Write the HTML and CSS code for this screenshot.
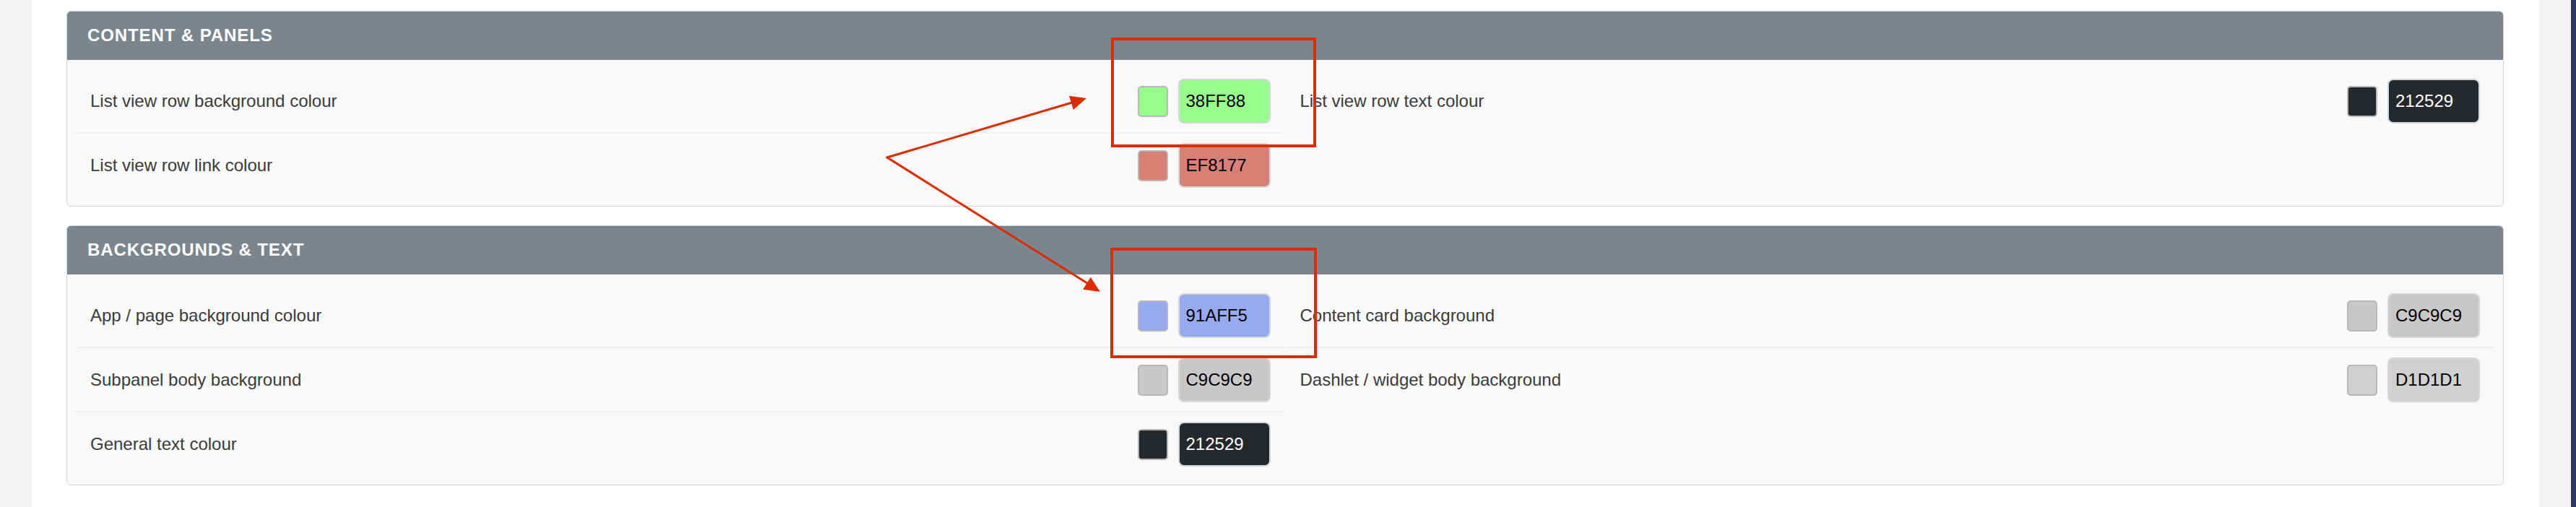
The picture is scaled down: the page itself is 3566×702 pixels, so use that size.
FILE: index.html
```html
<!DOCTYPE html>
<html lang="en">
<head>
    <meta charset="UTF-8">
    <title>Theme colours</title>
    <link rel="stylesheet" href="styles.css">
</head>
<body>
    <div class="gutter"></div>
    <div id="main">
        <div class="panel">
            <div class="panel-head">Content &amp; Panels</div>
            <div class="panel-body">
                <div class="col">
                    <div class="row">
                        <span class="label">List view row background colour</span>
                        <span class="swatch" style="background:#98fd8b"></span>
                        <input class="hex" type="text" value="38FF88" style="background:#98fd8b">
                    </div>
                    <div class="row">
                        <span class="label">List view row link colour</span>
                        <span class="swatch" style="background:#d87f76"></span>
                        <input class="hex" type="text" value="EF8177" style="background:#d87f76">
                    </div>
                </div>
                <div class="col">
                    <div class="row">
                        <span class="label">List view row text colour</span>
                        <span class="swatch" style="background:#26292c"></span>
                        <input class="hex dark" type="text" value="212529" style="background:#26292c">
                    </div>
                </div>
            </div>
        </div>

        <div class="panel">
            <div class="panel-head">Backgrounds &amp; Text</div>
            <div class="panel-body">
                <div class="col">
                    <div class="row">
                        <span class="label">App / page background colour</span>
                        <span class="swatch" style="background:#97aaf0"></span>
                        <input class="hex" type="text" value="91AFF5" style="background:#97aaf0">
                    </div>
                    <div class="row">
                        <span class="label">Subpanel body background</span>
                        <span class="swatch" style="background:#c8c8c8"></span>
                        <input class="hex" type="text" value="C9C9C9" style="background:#c8c8c8">
                    </div>
                    <div class="row">
                        <span class="label">General text colour</span>
                        <span class="swatch" style="background:#26292c"></span>
                        <input class="hex dark" type="text" value="212529" style="background:#26292c">
                    </div>
                </div>
                <div class="col">
                    <div class="row">
                        <span class="label">Content card background</span>
                        <span class="swatch" style="background:#c8c8c8"></span>
                        <input class="hex" type="text" value="C9C9C9" style="background:#c8c8c8">
                    </div>
                    <div class="row">
                        <span class="label">Dashlet / widget body background</span>
                        <span class="swatch" style="background:#d0d0d0"></span>
                        <input class="hex" type="text" value="D1D1D1" style="background:#d0d0d0">
                    </div>
                </div>
            </div>
        </div>
    </div>
    <div class="gutter"></div>
    <div class="edge"></div>

    <!-- annotation drawn over the screenshot -->
    <svg class="marks" width="3566" height="702" viewBox="0 0 3566 702">
        <g fill="none" stroke="#dc2c02" stroke-width="4">
            <rect x="1540" y="54" width="280" height="148"/>
            <rect x="1539" y="345" width="282" height="149"/>
        </g>
        <g stroke="#dc2c02" stroke-width="3" stroke-linecap="round">
            <line x1="1228" y1="218" x2="1484" y2="142"/>
            <line x1="1228" y1="218" x2="1505" y2="392"/>
        </g>
        <g fill="#dc2c02">
            <polygon points="1504,136 1485.8,151.9 1480,132.7"/>
            <polygon points="1523,404 1499.1,400.8 1509.7,383.8"/>
        </g>
    </svg>
</body>
</html>
```

FILE: styles.css
```css
:root{
    --head: #7b858e;
    --line: #d0d4d9;
    --soft: #f3f3f3;
    --body: #f9f9f9;
}
*{
    margin: 0;
    padding: 0;
    box-sizing: border-box;
}
body{
    display: flex;
    height: 702px;
    overflow: hidden;
    font-family: "Liberation Sans", Arial, sans-serif;
    background: #fff;
}
.gutter{
    width: 44px;
    flex: none;
    background: var(--soft);
}
.edge{
    width: 7px;
    flex: none;
    background: #2c3a60;
}
#main{
    flex: 1;
    padding: 15px 49px 0 48px;
    background: #fff;
}
.panel{
    border: 1px solid var(--line);
    border-radius: 6px;
    overflow: hidden;
    margin-bottom: 26px;
    background: var(--body);
}
.panel-head{
    height: 67px;
    display: flex;
    align-items: center;
    padding-left: 28px;
    padding-bottom: 2px;
    background: var(--head);
    color: #fff;
    font-size: 24px;
    font-weight: bold;
    letter-spacing: 0.9px;
    text-transform: uppercase;
}
.panel-body{
    display: grid;
    grid-template-columns: 1fr 1fr;
    column-gap: 2px;
    align-items: start;
    padding: 13px 12px 13px 13px;
}
.row{
    display: flex;
    align-items: center;
    padding: 13px 20px 12px 19px;
    border-bottom: 2px solid #efefef;
}
.row:last-child{
    border-bottom: none;
}
.label{
    flex: 1;
    font-size: 24px;
    color: #3b3b3b;
}
.swatch{
    width: 42px;
    height: 43px;
    border: 2px solid #b8b8b8;
    border-radius: 5px;
    margin-right: 14px;
}
.hex{
    width: 128px;
    height: 62px;
    border: 2px solid #d4d8dd;
    border-radius: 8px;
    padding: 0 9px;
    font-family: "Liberation Sans", Arial, sans-serif;
    font-size: 24px;
    color: #000;
    outline: none;
}
.hex.dark{
    color: #fff;
}
.marks{
    position: absolute;
    top: 0;
    left: 0;
    pointer-events: none;
}
```
